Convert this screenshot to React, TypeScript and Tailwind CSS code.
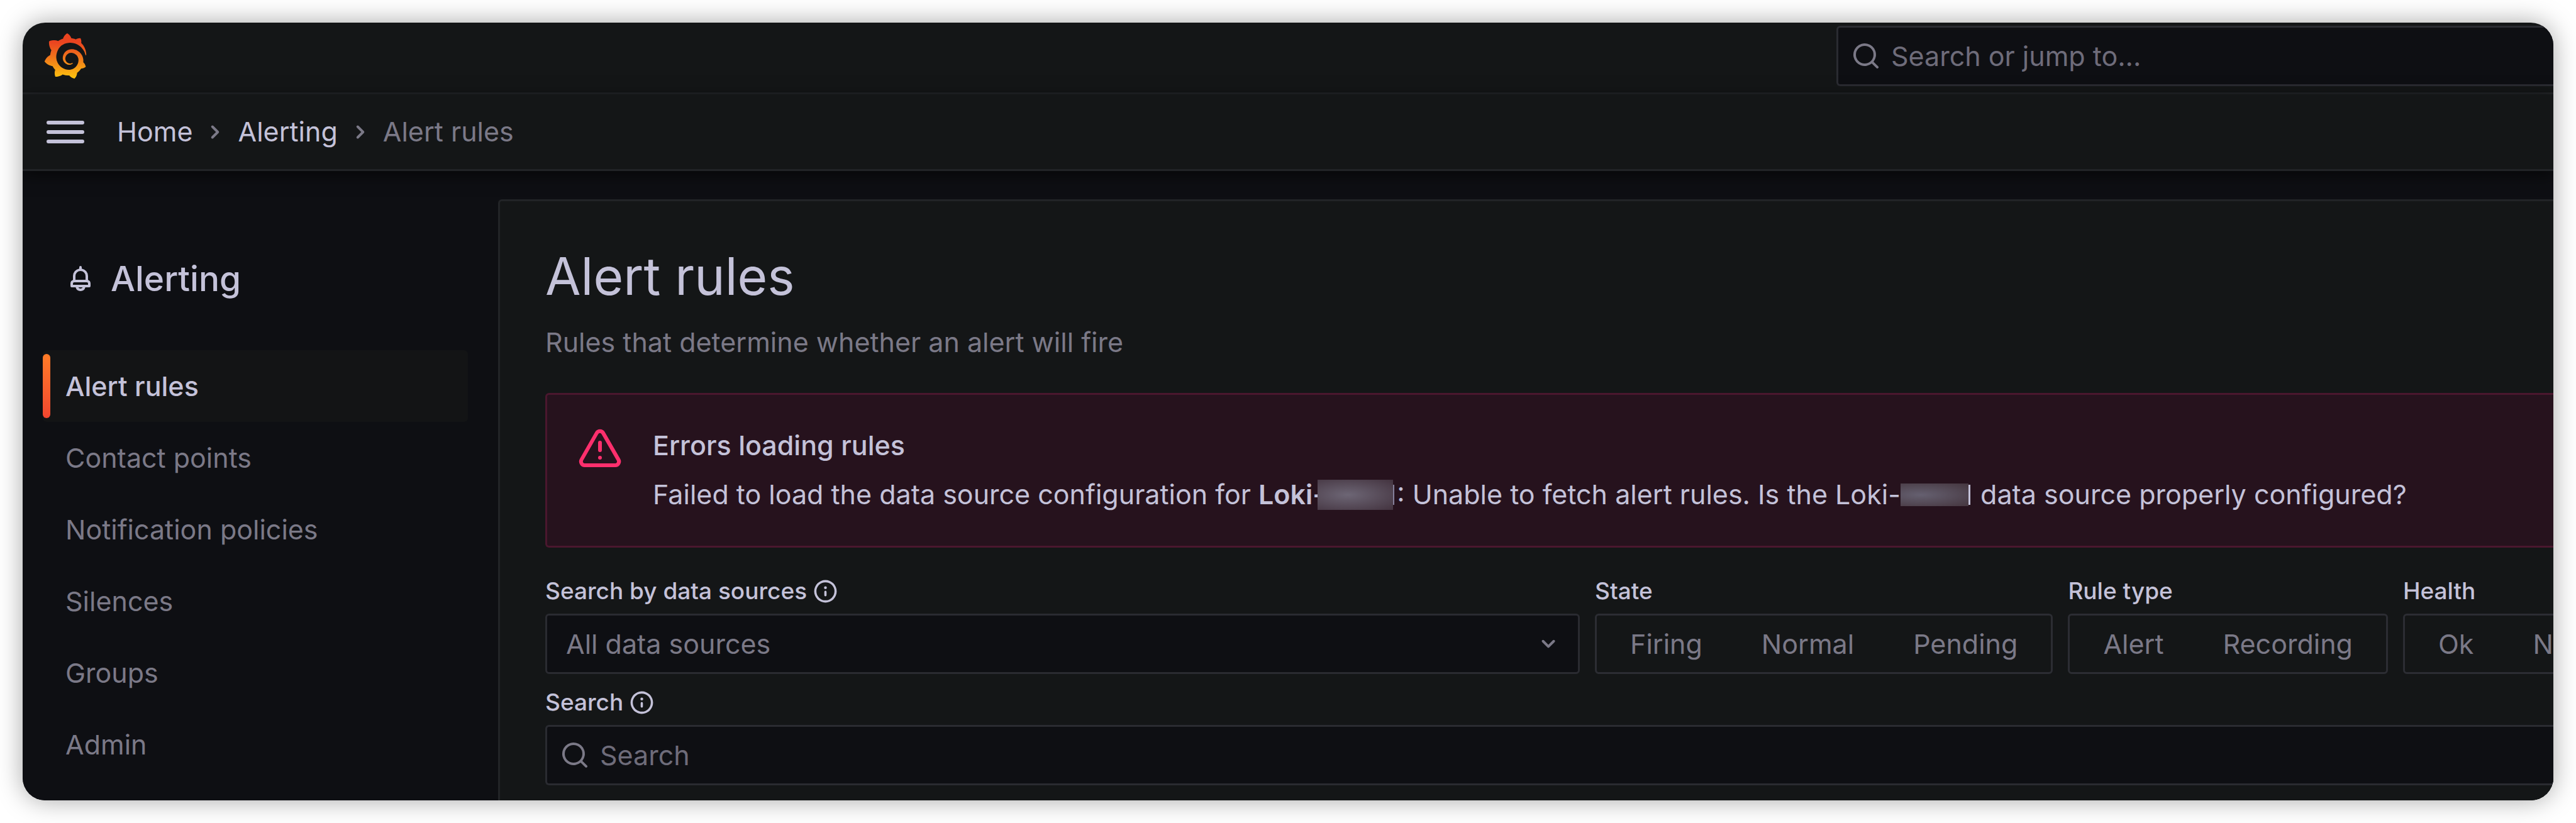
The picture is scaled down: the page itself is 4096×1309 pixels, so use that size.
import { useState } from 'react';
import type { ReactNode } from 'react';
import { clsx } from 'clsx';
import { SiGrafana } from 'react-icons/si';

const icons = {
  bars: 'M3,8H21a1,1,0,0,0,0-2H3A1,1,0,0,0,3,8Zm18,8H3a1,1,0,0,0,0,2H21a1,1,0,0,0,0-2Zm0-5H3a1,1,0,0,0,0,2H21a1,1,0,0,0,0-2Z',
  angleRight:
    'M14.83,11.29,10.59,7.05a1,1,0,0,0-1.42,0,1,1,0,0,0,0,1.41L12.71,12,9.17,15.54a1,1,0,0,0,0,1.41,1,1,0,0,0,.71.29,1,1,0,0,0,.71-.29l4.24-4.24A1,1,0,0,0,14.83,11.29Z',
  angleDown:
    'M17,9.17a1,1,0,0,0-1.41,0L12,12.71,8.46,9.17a1,1,0,0,0-1.41,0,1,1,0,0,0,0,1.42l4.24,4.24a1,1,0,0,0,1.42,0L17,10.59A1,1,0,0,0,17,9.17Z',
  bell: 'M18,13.18V10a6,6,0,0,0-5-5.91V3a1,1,0,0,0-2,0V4.09A6,6,0,0,0,6,10v3.18A3,3,0,0,0,4,16v2a1,1,0,0,0,1,1H8.14a4,4,0,0,0,7.72,0H19a1,1,0,0,0,1-1V16A3,3,0,0,0,18,13.18ZM8,10a4,4,0,0,1,8,0v3H8Zm4,10a2,2,0,0,1-1.72-1h3.44A2,2,0,0,1,12,20Zm6-3H6V16a1,1,0,0,1,1-1H17a1,1,0,0,1,1,1Z',
  search:
    'M21.71,20.29,18,16.61A9,9,0,1,0,16.61,18l3.68,3.68a1,1,0,0,0,1.42,0A1,1,0,0,0,21.71,20.29ZM11,18a7,7,0,1,1,7-7A7,7,0,0,1,11,18Z',
  info: 'M12,2A10,10,0,1,0,22,12,10,10,0,0,0,12,2Zm0,18a8,8,0,1,1,8-8A8,8,0,0,1,12,20Zm0-8.5a1,1,0,0,0-1,1v3a1,1,0,0,0,2,0v-3A1,1,0,0,0,12,11.5Zm0-4a1.25,1.25,0,1,0,1.25,1.25A1.25,1.25,0,0,0,12,7.5Z',
  warning:
    'M12,16a1,1,0,1,0,1,1A1,1,0,0,0,12,16Zm10.67,1.47-8.05-14a3,3,0,0,0-5.24,0l-8,14A3,3,0,0,0,3.94,22H20.06a3,3,0,0,0,2.61-4.53Zm-1.73,2a1,1,0,0,1-.88.51H3.94a1,1,0,0,1-.88-.51,1,1,0,0,1,0-1l8-14a1,1,0,0,1,1.78,0l8.05,14A1,1,0,0,1,20.94,19.49ZM12,8a1,1,0,0,0-1,1v4a1,1,0,0,0,2,0V9A1,1,0,0,0,12,8Z',
};

function Icon({ name, className }: { name: keyof typeof icons; className?: string }) {
  return (
    <svg viewBox="0 0 24 24" fill="currentColor" aria-hidden="true" className={clsx('shrink-0', className)}>
      <path d={icons[name]} />
    </svg>
  );
}

const navItems = ['Alert rules', 'Contact points', 'Notification policies', 'Silences', 'Groups', 'Admin'];

const radioFilters = [
  { label: 'State', options: ['Firing', 'Normal', 'Pending'] },
  { label: 'Rule type', options: ['Alert', 'Recording'] },
  { label: 'Health', options: ['Ok', 'No Data'] },
];

function FieldLabel({ htmlFor, children }: { htmlFor: string; children: ReactNode }) {
  return (
    <label htmlFor={htmlFor} className="flex h-12 items-center gap-2 text-[37px] leading-12 font-medium">
      {children}
      <Icon name="info" className="size-[43px]" />
    </label>
  );
}

function RadioFilter({ label, options }: { label: string; options: string[] }) {
  const [selected, setSelected] = useState<string | null>(null);

  return (
    <fieldset className="shrink-0">
      <legend className="mb-3 h-12 text-[37px] leading-12 font-medium">{label}</legend>
      <div className="flex h-24 rounded-md border-3 border-[#2c2d33] px-1.5">
        {options.map((option) => (
          <label
            key={option}
            className={clsx(
              'flex cursor-pointer items-center px-[47px] whitespace-nowrap',
              selected === option ? 'text-[#c4c2d9]' : 'text-[#7b7987]'
            )}
          >
            <input
              type="radio"
              name={label}
              checked={selected === option}
              onChange={() => setSelected(option)}
              className="sr-only"
            />
            {option}
          </label>
        ))}
      </div>
    </fieldset>
  );
}

function TopBar() {
  return (
    <header className="flex h-[114px] items-center justify-between border-b-3 border-[#222427] pb-1.5 pl-8">
      <a href="#home" aria-label="Grafana">
        <svg className="absolute size-0" aria-hidden="true">
          <linearGradient id="grafana-logo" x1="0" y1="0" x2="0" y2="1">
            <stop offset="0.2" stopColor="#ea4420" />
            <stop offset="0.5" stopColor="#f0701b" />
            <stop offset="1" stopColor="#fcc40f" />
          </linearGradient>
        </svg>
        <SiGrafana className="size-[72px]" fill="url(#grafana-logo)" />
      </a>
      <div className="flex h-24 w-[1140px] shrink-0 items-center gap-4 rounded-l-md border-3 border-r-0 border-[#2a2b31] bg-[#0e0f13] pl-5 text-[#7b7987]">
        <Icon name="search" className="size-12" />
        <input
          type="text"
          aria-label="Search or jump to"
          placeholder="Search or jump to..."
          className="h-full min-w-0 flex-1 bg-transparent outline-none placeholder:text-[#6e6c7a]"
        />
      </div>
    </header>
  );
}

function Breadcrumbs() {
  return (
    <div className="relative z-10 flex h-[122px] items-center border-b-3 border-[#222427] bg-[#141617] pl-8 shadow-[0_6px_24px_rgba(0,0,0,0.6)]">
      <button type="button" aria-label="Toggle menu" className="mr-[46px]">
        <Icon name="bars" className="size-[72px]" />
      </button>
      <nav aria-label="Breadcrumbs" className="flex items-center gap-3">
        <a href="#home">Home</a>
        <Icon name="angleRight" className="size-12 text-[#7b7987]" />
        <a href="#alerting">Alerting</a>
        <Icon name="angleRight" className="size-12 text-[#7b7987]" />
        <span className="text-[#7b7987]">Alert rules</span>
      </nav>
    </div>
  );
}

function Sidebar() {
  return (
    <aside className="w-[756px] shrink-0 pt-[135px] pr-12 pl-8">
      <div className="mb-[78px] flex h-[72px] items-center gap-6 pl-9">
        <Icon name="bell" className="size-12" />
        <h2 className="text-[55px] leading-[72px] font-medium">Alerting</h2>
      </div>
      <nav aria-label="Alerting">
        {navItems.map((item, index) => (
          <a
            key={item}
            href={`#${item}`}
            className={clsx(
              'flex h-[114px] items-center rounded-md py-1.5',
              index === 0 ? 'bg-[#131415] font-medium' : 'text-[#7b7987]'
            )}
          >
            <span
              className={clsx(
                'mr-6 h-full w-3 rounded-md',
                index === 0 && 'bg-linear-to-b from-[#ff7b27] to-[#f2452f]'
              )}
            />
            {item}
          </a>
        ))}
      </nav>
    </aside>
  );
}

function ErrorAlert() {
  return (
    <div
      role="alert"
      className="mt-[49px] flex h-[246px] gap-12 rounded-l-md border-3 border-r-0 border-[#4a172e] bg-[#26121d] pt-[49px] pl-12"
    >
      <Icon name="warning" className="size-[72px] text-[#ff2f6d]" />
      <div className="whitespace-nowrap">
        <h3 className="mb-[15px] font-medium">Errors loading rules</h3>
        {/* Data source names are redacted */}
        <p className="flex items-center">
          <span className="whitespace-pre">
            Failed to load the data source configuration for <b className="font-semibold">Loki-</b>
          </span>
          <span className="-ml-3 h-12 w-[120px] bg-radial-[at_40%_50%] from-[#6d6675] to-[#43333f]" />
          <span className="mr-1 h-8 w-0.5 bg-[#85809a]" />
          <span className="whitespace-pre">: Unable to fetch alert rules. Is the Loki-</span>
          <span className="h-9 w-[108px] bg-radial-[at_30%_50%] from-[#656070] to-[#45363f]" />
          <span className="mr-1 h-8 w-[3px] bg-[#c4c2d9]" />
          <span className="whitespace-pre"> data source properly configured?</span>
        </p>
      </div>
    </div>
  );
}

export default function App() {
  const [query, setQuery] = useState('');

  return (
    <div className="flex min-h-screen bg-white p-9 font-['Inter',sans-serif] text-[43px] leading-[63px] text-[#c4c2d9]">
      <div className="flex min-w-0 flex-1 flex-col overflow-hidden rounded-[36px] bg-[#141617] shadow-[0_0_40px_rgba(0,0,0,0.35)]">
        <TopBar />
        <Breadcrumbs />
        <div className="flex flex-1 bg-[#0e0f13]">
          <Sidebar />
          <main className="mt-[45px] min-w-0 flex-1 rounded-tl-md border-t-3 border-l-3 border-[#222427] bg-[#141617] pt-[69px] pl-[72px]">
            <h1 className="text-[82px] leading-[102px]">Alert rules</h1>
            <p className="mt-[22px] text-[#7b7987]">Rules that determine whether an alert will fire</p>

            <ErrorAlert />

            {/* Filters */}
            <div className="mt-[45px] flex gap-6">
              <div className="shrink-0">
                <FieldLabel htmlFor="data-source">Search by data sources</FieldLabel>
                <div className="relative mt-3">
                  <select
                    id="data-source"
                    className="block h-24 w-[1645px] appearance-none rounded-md border-3 border-[#2a2b31] bg-[#0e0f13] px-[30px] text-[#7b7987] outline-none"
                  >
                    <option>All data sources</option>
                  </select>
                  <Icon
                    name="angleDown"
                    className="pointer-events-none absolute top-6 right-[26px] size-12 text-[#7b7987]"
                  />
                </div>
              </div>
              {radioFilters.map((filter) => (
                <RadioFilter key={filter.label} label={filter.label} options={filter.options} />
              ))}
            </div>

            <div className="mt-[21px]">
              <FieldLabel htmlFor="rule-search">Search</FieldLabel>
              <div className="mt-3 flex h-24 items-center gap-4 rounded-l-md border-3 border-r-0 border-[#2a2b31] bg-[#0e0f13] pl-5 text-[#7b7987]">
                <Icon name="search" className="size-12" />
                <input
                  id="rule-search"
                  type="text"
                  value={query}
                  onChange={(e) => setQuery(e.target.value)}
                  placeholder="Search"
                  className="h-full min-w-0 flex-1 bg-transparent outline-none placeholder:text-[#6e6c7a]"
                />
              </div>
            </div>
          </main>
        </div>
      </div>
    </div>
  );
}
